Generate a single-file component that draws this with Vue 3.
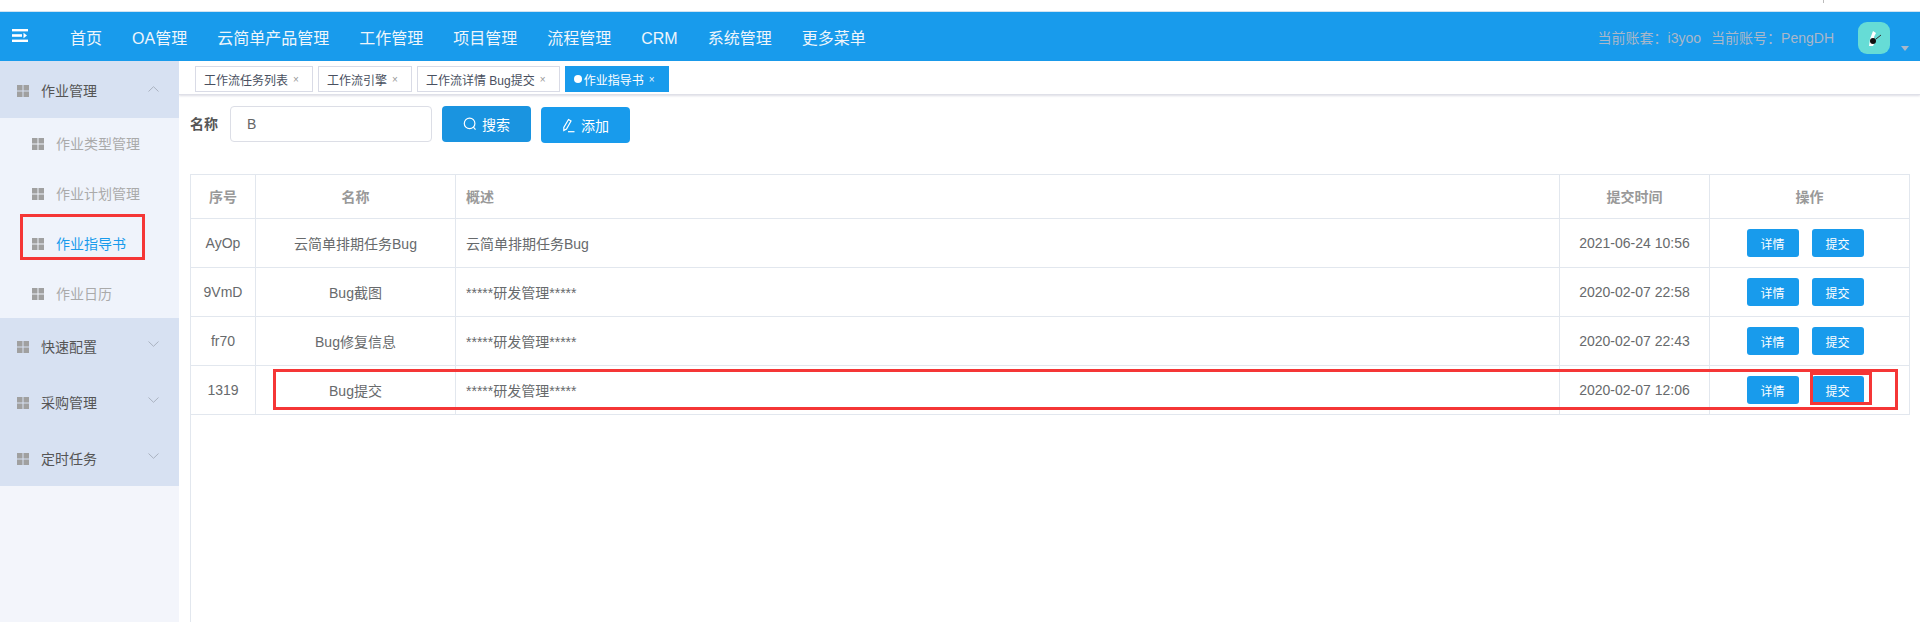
<script setup>
const nav = ['首页', 'OA管理', '云简单产品管理', '工作管理', '项目管理', '流程管理', 'CRM', '系统管理', '更多菜单']
const subs = [
  { label: '作业类型管理' },
  { label: '作业计划管理' },
  { label: '作业指导书', active: true },
  { label: '作业日历' }
]
const groups = ['快速配置', '采购管理', '定时任务']
const tabs = [
  { label: '工作流任务列表' },
  { label: '工作流引擎' },
  { label: '工作流详情 Bug提交' },
  { label: '作业指导书', active: true }
]
const rows = [
  { id: 'AyOp', name: '云简单排期任务Bug', desc: '云简单排期任务Bug', time: '2021-06-24 10:56' },
  { id: '9VmD', name: 'Bug截图', desc: '*****研发管理*****', time: '2020-02-07 22:58' },
  { id: 'fr70', name: 'Bug修复信息', desc: '*****研发管理*****', time: '2020-02-07 22:43' },
  { id: '1319', name: 'Bug提交', desc: '*****研发管理*****', time: '2020-02-07 12:06' }
]
</script>

<template>
  <div class="page">
    <div class="strip"><i class="tick"></i></div>
    <header class="topbar">
      <svg class="burger" width="16" height="13" viewBox="0 0 16 13">
        <rect x="0" y="0" width="16" height="2.4" fill="#fff" />
        <rect x="0" y="5.2" width="10" height="2.6" fill="#fff" />
        <path d="M11.5 3.8 L15 6.5 L11.5 9.2 Z" fill="#fff" />
        <rect x="0" y="10.6" width="16" height="2.4" fill="#fff" />
      </svg>
      <nav class="nav">
        <a v-for="n in nav" :key="n" class="nav-item">{{ n }}</a>
      </nav>
      <div class="account">
        <span>当前账套：i3yoo</span>
        <span>当前账号：PengDH</span>
      </div>
      <div class="avatar">
        <svg width="32" height="32" viewBox="0 0 32 32">
          <path d="M15 9 L18 11 L16 15 L17 20 L15 24 L11 24 L12 17 Z" fill="#fff" />
          <circle cx="15" cy="19" r="3" fill="#111" />
          <path d="M18 17 L23 13" stroke="#333" stroke-width="1" />
        </svg>
      </div>
      <i class="caret"></i>
    </header>

    <div class="body">
      <aside class="sidebar">
        <div class="group open">
          <svg class="grid" width="12" height="12" viewBox="0 0 12 12"><path d="M0 0h5.5v5.5H0zM6.5 0H12v5.5H6.5zM0 6.5h5.5V12H0zM6.5 6.5H12V12H6.5z" /></svg>
          <span class="group-label">作业管理</span>
          <svg class="chev" width="11" height="6" viewBox="0 0 11 6"><path d="M0.5 5.5 L5.5 0.7 L10.5 5.5" /></svg>
        </div>
        <div class="subs">
          <div v-for="s in subs" :key="s.label" class="sub" :class="{ active: s.active }">
            <svg class="grid" width="12" height="12" viewBox="0 0 12 12"><path d="M0 0h5.5v5.5H0zM6.5 0H12v5.5H6.5zM0 6.5h5.5V12H0zM6.5 6.5H12V12H6.5z" /></svg>
            <span>{{ s.label }}</span>
          </div>
        </div>
        <div v-for="g in groups" :key="g" class="group">
          <svg class="grid" width="12" height="12" viewBox="0 0 12 12"><path d="M0 0h5.5v5.5H0zM6.5 0H12v5.5H6.5zM0 6.5h5.5V12H0zM6.5 6.5H12V12H6.5z" /></svg>
          <span class="group-label">{{ g }}</span>
          <svg class="chev" width="11" height="6" viewBox="0 0 11 6"><path d="M0.5 0.5 L5.5 5.3 L10.5 0.5" /></svg>
        </div>
      </aside>

      <main class="main">
        <div class="tabs">
          <div v-for="t in tabs" :key="t.label" class="tab" :class="{ active: t.active }">
            <i v-if="t.active" class="dot"></i>
            <span>{{ t.label }}</span>
            <span class="close">×</span>
          </div>
        </div>

        <div class="search">
          <label class="search-label">名称</label>
          <div class="input">B</div>
          <button class="btn btn-search">
            <svg width="14" height="14" viewBox="0 0 14 14"><circle cx="6.6" cy="6.4" r="5.3" /><path d="M10.4 10.2 L12.5 12.6" /></svg>
            搜索
          </button>
          <button class="btn btn-add">
            <svg width="14" height="15" viewBox="0 0 14 15"><path d="M6.5 1.5 L9 3 L4.5 11 L1.8 12.5 L1.8 9.5 Z" /><path d="M6 13.7 H12.5" /></svg>
            添加
          </button>
        </div>

        <div class="panel">
          <table class="table">
            <colgroup>
              <col class="c1" /><col class="c2" /><col class="c3" /><col class="c4" /><col class="c5" />
            </colgroup>
            <thead>
              <tr>
                <th>序号</th>
                <th>名称</th>
                <th class="left">概述</th>
                <th>提交时间</th>
                <th>操作</th>
              </tr>
            </thead>
            <tbody>
              <tr v-for="r in rows" :key="r.id">
                <td>{{ r.id }}</td>
                <td>{{ r.name }}</td>
                <td class="left">{{ r.desc }}</td>
                <td>{{ r.time }}</td>
                <td>
                  <div class="ops">
                    <button class="op">详情</button>
                    <button class="op">提交</button>
                  </div>
                </td>
              </tr>
            </tbody>
          </table>
        </div>
      </main>
    </div>

    <i class="mark mark-menu"></i>
    <i class="mark mark-row"></i>
    <i class="mark mark-btn"></i>
  </div>
</template>

<style>
html, body { margin: 0; background: #fff; overflow: hidden; }
</style>

<style scoped>
.page {
  position: relative;
  width: 1920px;
  height: 622px;
  overflow: hidden;
  display: flex;
  flex-direction: column;
  font-family: "Liberation Sans", "Noto Sans CJK SC", sans-serif;
  font-size: 14px;
  color: #676a6c;
}
.strip {
  height: 11px;
  border-bottom: 1px solid #cfe3f2;
  flex: none;
  box-sizing: content-box;
}
.tick {
  display: block;
  width: 1px;
  height: 3px;
  margin-left: 1823px;
  background: #bbb;
}
.topbar {
  height: 49px;
  flex: none;
  background: #189bec;
  display: flex;
  align-items: center;
  padding: 0 11px 0 12px;
}
.burger { flex: none; margin-bottom: 2px; }
.nav { display: flex; align-items: baseline; margin-left: 42px; }
.nav-item {
  font-size: 16px;
  color: #eef5fb;
  margin-right: 30px;
  white-space: nowrap;
}
.account {
  margin-left: auto;
  display: flex;
  gap: 10px;
  font-size: 14px;
  color: #aab7c9;
  white-space: nowrap;
}
.avatar {
  width: 32px;
  height: 32px;
  border-radius: 9px;
  background: #66dcd6;
  margin-left: 24px;
  margin-top: 3px;
  overflow: hidden;
  flex: none;
}
.avatar svg { display: block; }
.caret {
  width: 0;
  height: 0;
  border-left: 4px solid transparent;
  border-right: 4px solid transparent;
  border-top: 5px solid #aab7c9;
  margin-left: 11px;
  margin-top: 24px;
  flex: none;
}
.body { flex: 1; display: flex; min-height: 0; }
.sidebar {
  width: 179px;
  flex: none;
  background: #f3f5fb;
}
.group {
  height: 56px;
  background: #d7e1f2;
  display: flex;
  align-items: center;
  padding-left: 17px;
  position: relative;
  color: #555;
}
.group.open { height: 57px; }
.group-label { margin-left: 12px; }
.grid { fill: #a0a0a0; flex: none; margin-top: 2px; }
.chev {
  position: absolute;
  left: 148px;
  top: 23px;
  fill: none;
  stroke: #aab2c0;
  stroke-width: 1;
}
.group.open .chev { top: 25px; }
.subs { background: #eff3fb; }
.sub {
  height: 50px;
  display: flex;
  align-items: center;
  padding-left: 32px;
  color: #aaa;
}
.sub span { margin-left: 12px; }
.sub.active { color: #189bec; }
.main {
  flex: 1;
  min-width: 0;
  display: flex;
  flex-direction: column;
}
.tabs {
  height: 34px;
  flex: none;
  box-sizing: border-box;
  padding: 5px 0 0 16px;
  display: flex;
  gap: 5px;
  border-bottom: 1px solid #dfe0e8;
  box-shadow: 0 1px 2px rgba(120, 120, 150, 0.25);
}
.tab {
  height: 26px;
  box-sizing: border-box;
  border: 1px solid #d9dbe6;
  padding: 0 13px 0 8px;
  display: flex;
  align-items: center;
  font-size: 12px;
  color: #495060;
  white-space: nowrap;
}
.tab .close {
  width: 6px;
  margin-left: 5px;
  font-size: 10px;
  text-align: center;
  color: #999;
}
.tab.active {
  background: #189bec;
  border-color: #189bec;
  color: #fff;
}
.tab.active .close { color: #e8f4fd; }
.dot {
  width: 8px;
  height: 8px;
  border-radius: 50%;
  background: #fff;
  margin-right: 2px;
}
.search {
  display: flex;
  align-items: flex-start;
  padding: 11px 0 0 11px;
  height: 80px;
  flex: none;
  box-sizing: border-box;
}
.search-label {
  font-weight: 700;
  color: #555;
  line-height: 36px;
  width: 40px;
}
.input {
  width: 202px;
  height: 36px;
  box-sizing: border-box;
  border: 1px solid #dcdee6;
  border-radius: 4px;
  padding-left: 16px;
  line-height: 34px;
  color: #666;
}
.btn {
  height: 36px;
  width: 89px;
  border: 0;
  border-radius: 4px;
  color: #fff;
  font: inherit;
  display: flex;
  align-items: center;
  justify-content: center;
  gap: 5px;
  padding: 0;
  fill: none;
}
.btn svg { stroke: #fff; stroke-width: 1.2; fill: none; }
.btn-search { background: #1a94e0; margin-left: 10px; }
.btn-add { background: #189bec; margin-left: 10px; margin-top: 1px; }
.panel {
  flex: 1;
  margin-left: 11px;
  border-left: 1px solid #e2e7ee;
  min-height: 0;
}
.table {
  border-collapse: collapse;
  table-layout: fixed;
  width: 1719px;
  margin: -1px 0 0 -1px;
}
.c1 { width: 65px; }
.c2 { width: 200px; }
.c3 { width: 1104px; }
.c4 { width: 150px; }
.c5 { width: 200px; }
.table th, .table td {
  border: 1px solid #e2e7ee;
  text-align: center;
  padding: 0;
  box-sizing: border-box;
}
.table th { height: 44px; font-weight: 700; color: #999; font-size: 14px; padding-bottom: 2px; }
.table td { height: 49px; color: #676a6c; }
.table .left { text-align: left; padding-left: 10px; }
.ops {
  display: flex;
  justify-content: center;
  gap: 13px;
  padding-right: 9px;
}
.op {
  width: 52px;
  height: 28px;
  background: #189bec;
  border: 0;
  border-radius: 3px;
  color: #fff;
  font: inherit;
  font-size: 12px;
  padding: 0;
}
.mark {
  position: absolute;
  box-sizing: border-box;
  border: 3px solid #f53636;
  pointer-events: none;
}
.mark-menu { left: 20px; top: 214px; width: 125px; height: 46px; }
.mark-row { left: 273px; top: 369px; width: 1625px; height: 41px; }
.mark-btn { left: 1810px; top: 372px; width: 62px; height: 33px; }
</style>
